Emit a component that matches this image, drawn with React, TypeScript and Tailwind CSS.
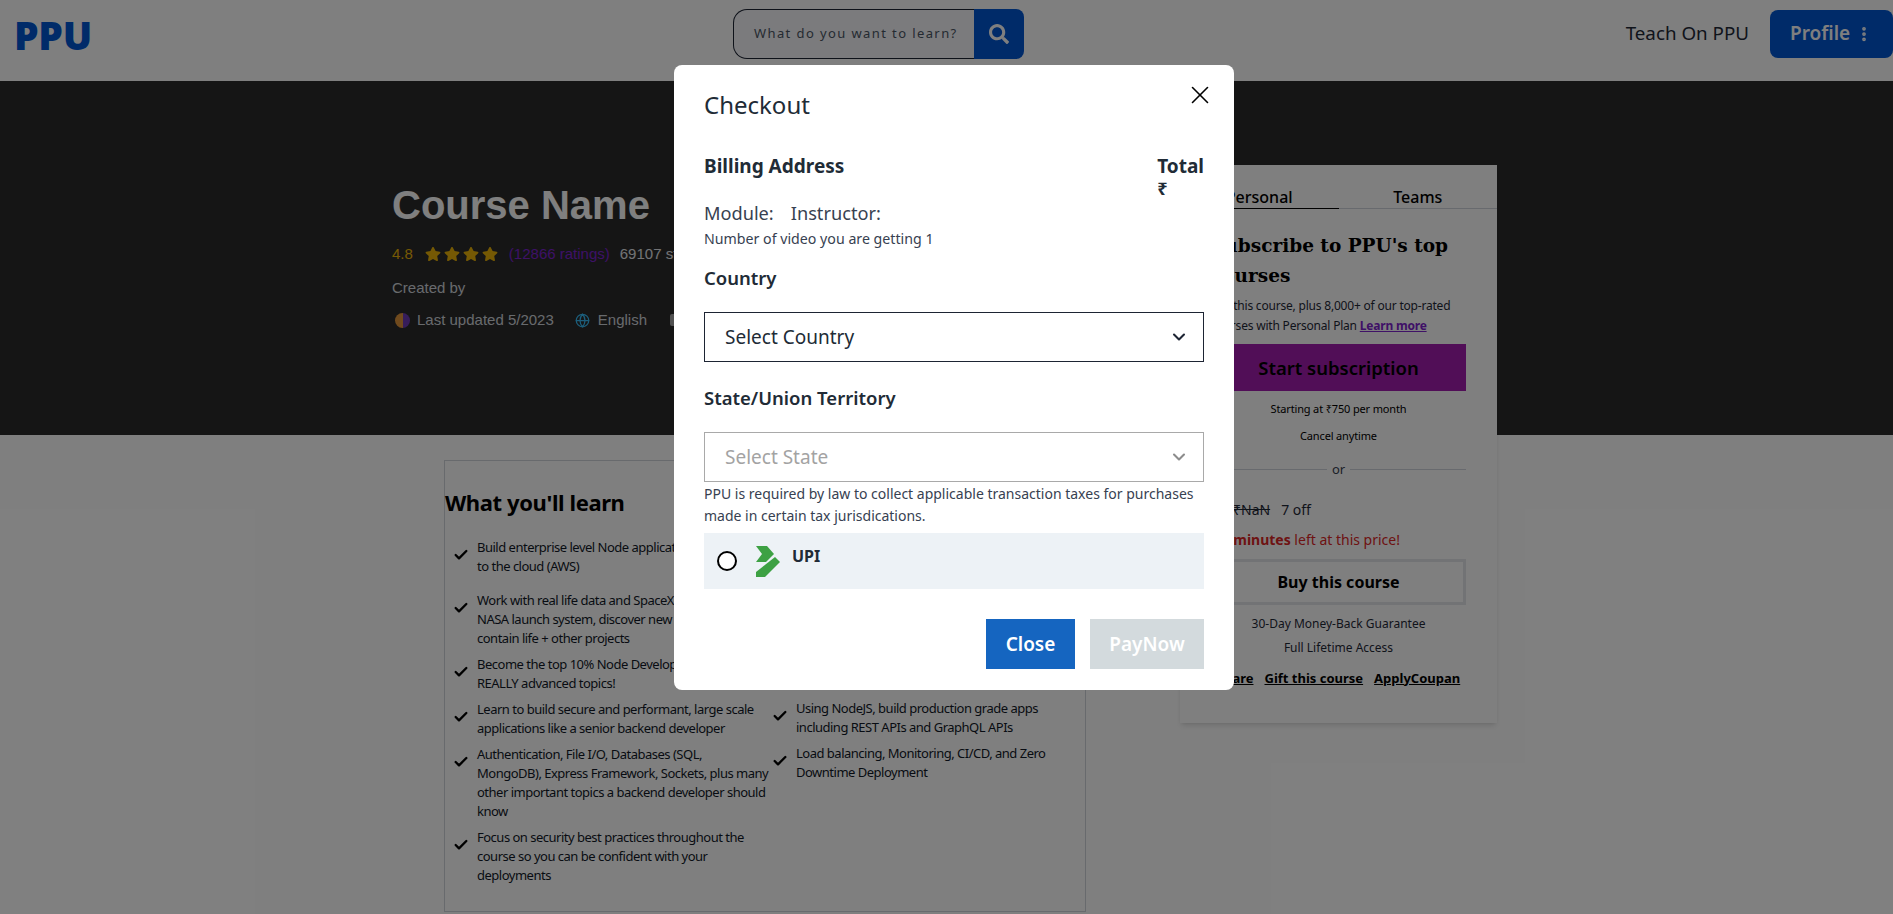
import React from 'react';
import { X, ChevronDown, EllipsisVertical, Check, Globe } from 'lucide-react';
import { FaSearch, FaStar } from 'react-icons/fa';

const sans = { fontFamily: '"Noto Sans", "Open Sans", sans-serif' };

const leftItems = [
  'Build enterprise level Node applications and deploy\nto the cloud (AWS)',
  'Work with real life data and SpaceX API to track the\nNASA launch system, discover new planets that may\ncontain life + other projects',
  'Become the top 10% Node Developer by learning\nREALLY advanced topics!',
  'Learn to build secure and performant, large scale\napplications like a senior backend developer',
  'Authentication, File I/O, Databases (SQL,\nMongoDB), Express Framework, Sockets, plus many\nother important topics a backend developer should\nknow',
  'Focus on security best practices throughout the\ncourse so you can be confident with your\ndeployments',
];

const rightItems = [
  'Using NodeJS, build production grade apps\nincluding REST APIs and GraphQL APIs',
  'Load balancing, Monitoring, CI/CD, and Zero\nDowntime Deployment',
];

const LearnItem: React.FC<{ text: string }> = ({ text }) => (
  <div className="flex items-start">
    <Check size={16} strokeWidth={3.5} className="shrink-0 mt-[9px] mr-[8px]" />
    <p className="whitespace-pre-line text-[13px] leading-[19px] tracking-[-0.5px] text-[#111827]">{text}</p>
  </div>
);

const SelectBox: React.FC<{ label: string; disabled?: boolean }> = ({ label, disabled }) => (
  <div
    className={`h-[50px] flex items-center justify-between pl-[20px] pr-[14px] border text-[19px] ${
      disabled ? 'border-[#a9a9a9] text-[#a3a3a3]' : 'border-[#1d2433] text-[#212b36]'
    }`}
  >
    <span>{label}</span>
    <ChevronDown size={20} strokeWidth={2.5} className={disabled ? 'text-[#8c8c8c]' : 'text-[#1d2433]'} />
  </div>
);

export default function App() {
  return (
    <div className="relative h-[914px] overflow-hidden bg-white text-black" style={sans}>
      {/* Header */}
      <header className="h-[81px] flex items-center pl-[14px]">
        <div className="w-[719px] text-[39px] leading-none font-black tracking-[-0.3px] text-[#0056d2] mt-[-13px]">PPU</div>
        <div className="flex h-[50px] w-[291px] mt-[-14px]">
          <div className="flex-1 flex items-center pl-[20px] border border-[#1d2433] border-r-0 rounded-l-[14px] bg-[#f6f7fb] text-[13px] tracking-[1.4px] text-[#4b5563]">
            What do you want to learn?
          </div>
          <div className="w-[50px] flex items-center justify-center bg-[#0056d2] rounded-r-[8px] text-white">
            <FaSearch size={20} />
          </div>
        </div>
        <div className="flex items-center ml-auto mt-[-14px]">
          <span className="text-[18.8px] text-[#1f2937] mr-[21px]">Teach On PPU</span>
          <div className="w-[123px] h-[48px] flex items-center pl-[20px] bg-[#0056d2] rounded-[8px] text-white text-[19px] font-semibold">
            Profile
            <EllipsisVertical size={18} strokeWidth={3} className="ml-[5px]" />
          </div>
        </div>
      </header>

      {/* Hero */}
      <section className="h-[354px] bg-[#2b2b2b] pl-[392px] pt-[100px] text-[#e5e7eb]" style={{ fontFamily: '"Liberation Sans", Arial, sans-serif' }}>
        <h1 className="text-[40px] leading-[48px] font-bold text-white">Course Name</h1>
        <div className="flex items-center mt-[15px] text-[15px] leading-[20px]">
          <span className="text-[#eab308]">4.8</span>
          <div className="flex gap-[3px] ml-[12px] mr-[11px] text-[#eab308]">
            {[0, 1, 2, 3].map((i) => (
              <FaStar key={i} size={16} />
            ))}
          </div>
          <span className="text-[#7c22ce]">(12866 ratings)</span>
          <span className="ml-[10px]">69107 students</span>
        </div>
        <p className="mt-[14px] text-[15px] leading-[20px] text-[#d1d5db]">Created by</p>
        <div className="flex items-center mt-[12px] text-[15px] leading-[20px] text-[#d1d5db]">
          <span className="w-[15px] h-[15px] rounded-full bg-[linear-gradient(90deg,#e0953a_50%,#6d3bb5_50%)] ml-[3px] mr-[7px]" />
          <span>Last updated 5/2023</span>
          <Globe size={15} className="ml-[21px] mr-[8px] text-[#38bdf8]" />
          <span>English</span>
          <span className="w-[9px] h-[12px] rounded-[2px] bg-[#a3a3a3] ml-[23px]" />
        </div>
      </section>

      {/* Body */}
      <div className="flex items-start pl-[444px]">
        <div className="w-[642px] h-[452px] mt-[25px] border border-[#d1d5db] shrink-0">
          <h2 className="text-[22px] leading-[30px] font-bold mt-[26px] mb-[21px] tracking-[-0.4px]">What you'll learn</h2>
          <div className="flex">
            <div className="w-[327px] pl-[8px] flex flex-col gap-[7px]">
              <div className="mb-[8px]"><LearnItem text={leftItems[0]} /></div>
              {leftItems.slice(1).map((t) => (
                <LearnItem key={t} text={t} />
              ))}
            </div>
            <div className="w-[300px] flex flex-col gap-[7px] pt-[161px]">
              {rightItems.map((t) => (
                <LearnItem key={t} text={t} />
              ))}
            </div>
          </div>
        </div>

        {/* Side card */}
        <aside className="w-[317px] h-[558px] ml-[94px] mt-[-270px] bg-white shadow-md relative shrink-0">
          <div className="flex h-[44px] text-[16px] leading-[20px] font-medium">
            <div className="w-1/2 flex items-end justify-center pb-[1px] border-b border-black">Personal</div>
            <div className="w-1/2 flex items-end justify-center pb-[1px] border-b border-gray-300">Teams</div>
          </div>
          <div className="px-[31px]">
            <h3 className="mt-[22px] mr-[-20px] text-[18.5px] leading-[30px] font-bold" style={{ fontFamily: '"DejaVu Serif", serif' }}>
              Subscribe to PPU's top courses
            </h3>
            <p className="mt-[5px] mr-[-12px] text-[12px] leading-[20px] tracking-[-0.2px] text-[#1f2937]">
              Get this course, plus 8,000+ of our top-rated courses with Personal Plan{' '}
              <span className="font-bold underline text-[#7e22ce]">Learn more</span>
            </p>
            <div className="mt-[8px] h-[47px] flex items-center justify-center bg-[#a21caf] text-[18.5px] font-semibold">
              Start subscription
            </div>
            <p className="mt-[9px] text-center text-[11px] leading-[18px] tracking-[-0.15px]">Starting at ₹750 per month</p>
            <p className="mt-[9px] text-center text-[11px] leading-[18px] tracking-[-0.15px]">Cancel anytime</p>
            <div className="flex items-center gap-[5px] mt-[15px] text-[13px] text-[#374151]">
              <span className="flex-1 h-px bg-gray-300" />
              or
              <span className="flex-1 h-px bg-gray-300" />
            </div>
            <div className="flex mt-[20px] text-[14px] leading-[20px] text-[#1f2937]">
              <span className="ml-[22px] line-through">₹NaN</span>
              <span className="ml-[11px]">7 off</span>
            </div>
            <p className="mt-[10px] mr-[66px] text-[14px] leading-[20px] text-[#dc2626] text-right whitespace-nowrap">
              <span className="font-bold">minutes</span> left at this price!
            </p>
            <div className="mt-[9px] h-[46px] flex items-center justify-center border-[3px] border-[#e5e7eb] text-[16px] font-bold">
              Buy this course
            </div>
            <p className="mt-[10px] text-center text-[12px] leading-[18px] text-[#1f2937]">30-Day Money-Back Guarantee</p>
            <p className="mt-[6px] text-center text-[12px] leading-[18px] text-[#1f2937]">Full Lifetime Access</p>
            <div className="flex justify-center gap-[11px] mt-[12px] mx-[-20px] text-[13px] font-bold underline whitespace-nowrap">
              <span>Share</span>
              <span>Gift this course</span>
              <span>ApplyCoupan</span>
            </div>
          </div>
        </aside>
      </div>

      {/* Backdrop */}
      <div className="absolute inset-0 bg-black/50" />

      {/* Modal */}
      <div className="absolute left-[674px] top-[65px] w-[560px] h-[625px] bg-white rounded-[8px] px-[30px] text-[#212b36]">
        <X size={30} strokeWidth={1.3} className="absolute right-[19px] top-[15px] text-black" />
        <h2 className="text-[24px] leading-[32px] mt-[24px]">Checkout</h2>

        <div className="flex justify-between mt-[32px]">
          <h3 className="text-[19px] leading-[26px] font-bold">Billing Address</h3>
          <div className="text-[19px] leading-[26px] font-bold">
            Total
            <div className="text-[18px] leading-[18px]">₹</div>
          </div>
        </div>
        <div className="mt-[4px] text-[18.2px] leading-[24px] text-[#374151]">
          Module:<span className="ml-[17px]">Instructor:</span>
        </div>
        <p className="mt-[4px] text-[14.2px] leading-[20px] text-[#374151]">Number of video you are getting 1</p>

        <label className="block mt-[17px] mb-[22px] text-[18.5px] leading-[24px] font-semibold">Country</label>
        <SelectBox label="Select Country" />

        <label className="block mt-[24px] mb-[22px] text-[18.5px] leading-[24px] font-semibold">State/Union Territory</label>
        <SelectBox label="Select State" disabled />

        <p className="mt-[1px] text-[14px] leading-[22px] text-[#374151]">
          PPU is required by law to collect applicable transaction taxes for purchases made in certain tax jurisdications.
        </p>

        <div className="flex items-center h-[56px] mt-[6px] pl-[13px] bg-[#edf2f6]">
          <span className="w-[20px] h-[20px] rounded-full border-2 border-black bg-white" />
          <svg width="26" height="33" viewBox="0 0 26 33" className="ml-[18px]">
            <path d="M1 1h11l7 8-8 8H1l6-8z" fill="#3da143" />
            <path d="M1 32v-5l19-15 5 5-15 15z" fill="#3da143" />
          </svg>
          <span className="ml-[11px] mt-[-10px] text-[16px] font-bold">UPI</span>
        </div>

        <div className="flex justify-end gap-[15px] mt-[30px]">
          <div className="w-[89px] h-[50px] flex items-center justify-center bg-[#1565c0] text-white text-[19px] font-semibold">
            Close
          </div>
          <div className="w-[114px] h-[50px] flex items-center justify-center bg-[#d3dadd] text-white text-[19px] font-semibold">
            PayNow
          </div>
        </div>
      </div>
    </div>
  );
}
